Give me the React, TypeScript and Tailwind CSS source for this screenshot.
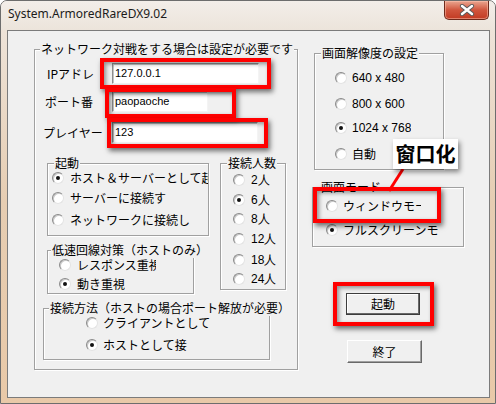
import React from "react";

const jp = "font-['Noto_Sans_CJK_JP','Noto_Sans_CJK_SC',sans-serif]";
const num = "font-['Liberation_Sans',Arial,sans-serif]";

function Radio({ label, checked, gap = 6, w, className = "", h = 20 }: { label: string; checked?: boolean; gap?: number; w?: number; className?: string; h?: number }) {
    return (
        <div className={`flex items-center ${className}`} style={{ height: h }}>
            <span className="flex h-[12px] w-[12px] shrink-0 items-center justify-center rounded-full border border-b-[#e3e3e3] border-l-[#8a8a8a] border-r-[#e3e3e3] border-t-[#8a8a8a] bg-white shadow-[inset_1px_1px_0_#c8c8c8]">
                {checked && <span className="h-[4px] w-[4px] rounded-full bg-[#111]" />}
            </span>
            <span
                className="overflow-hidden whitespace-nowrap text-[12px] leading-[16px] text-black"
                style={{ marginLeft: gap, width: w }}
            >
                {label}
            </span>
        </div>
    );
}

function Group({ title, titleLeft, className = "", children }: { title: string; titleLeft: number; className?: string; children?: React.ReactNode }) {
    return (
        <div className={`relative shrink-0 border border-[#a0a0a0] shadow-[inset_1px_1px_0_#ffffff,1px_1px_0_#ffffff] ${className}`}>
            <span
                className="absolute -top-[9px] whitespace-nowrap bg-[#f0f0f0] px-[1px] text-[12px] leading-[16px] text-black"
                style={{ left: titleLeft }}
            >
                {title}
            </span>
            {children}
        </div>
    );
}

function Field({ value, w }: { value: string; w: number }) {
    return (
        <div
            className={`flex h-[21px] items-center border border-b-[#f4f4f4] border-l-[#8c8c8c] border-r-[#f4f4f4] border-t-[#8c8c8c] bg-white pl-[2px] text-[11px] text-black shadow-[inset_1px_1px_0_#c4c4c4] ${num}`}
            style={{ width: w }}
        >
            {value}
        </div>
    );
}

function Highlight({ x, y, w, h }: { x: number; y: number; w: number; h: number }) {
    return (
        <div
            className="pointer-events-none absolute border-[4px] border-[#ff0000] shadow-[2px_3px_5px_rgba(0,0,0,0.55),inset_2px_2px_4px_rgba(0,0,0,0.4)]"
            style={{ left: x, top: y, width: w, height: h }}
        />
    );
}

export default function App() {
    return (
        <div className={`relative h-[404px] w-[496px] overflow-hidden rounded-t-[7px] border border-[#6d6d6d] bg-gradient-to-b from-[#efe7df] via-[#e6cdb2] to-[#e9c9a8] ${jp}`}>
            {/* title bar */}
            <div className="flex h-[29px] items-start justify-between bg-gradient-to-b from-[#f3eee9] to-[#ece4db]">
                <span className="ml-[7px] mt-[5px] font-['Noto_Sans',sans-serif] text-[12px] leading-[16px] text-[#1b1b1b]">
                    System.ArmoredRareDX9.02
                </span>
                <div className="mr-[6px] flex h-[19px] w-[45px] items-center justify-center rounded-b-[5px] border border-t-0 border-[#6e2a1c] bg-gradient-to-b from-[#e9a590] via-[#d0553d] to-[#c23a22] shadow-[inset_0_0_0_1px_rgba(255,200,180,0.5)]">
                    <svg width="16" height="12" viewBox="0 0 16 12">
                        <path d="M3 2 L13 10 M13 2 L3 10" stroke="#5a5a5a" strokeWidth="4.2" strokeLinecap="round" />
                        <path d="M3 2 L13 10 M13 2 L3 10" stroke="#ffffff" strokeWidth="2.4" strokeLinecap="round" />
                    </svg>
                </div>
            </div>

            {/* client area */}
            <div className="ml-[6px] h-[368px] w-[483px] border border-[#7b7b7b] bg-[#f0f0f0]">
                <div className="flex pl-[26px] pt-[18px]">
                    {/* left big group */}
                    <Group title="ネットワーク対戦をする場合は設定が必要です" titleLeft={5} className="h-[321px] w-[264px]">
                        <div className="flex flex-col">
                            <div className="mt-[13px] flex items-center">
                                <span className="w-[77px] pl-[12px] text-[12px] leading-[16px]">IPアドレ</span>
                                <Field value="127.0.0.1" w={147} />
                            </div>
                            <div className="mt-[7px] flex items-center">
                                <span className="w-[77px] pl-[10px] text-[12px] leading-[16px]">ポート番</span>
                                <Field value="paopaoche" w={96} />
                            </div>
                            <div className="mt-[10px] flex items-center">
                                <span className="w-[77px] pl-[8px] text-[12px] leading-[16px]">プレイヤー</span>
                                <Field value="123" w={146} />
                            </div>

                            <div className="mt-[20px] flex pl-[12px]">
                                <div className="flex flex-col">
                                    <Group title="起動" titleLeft={6} className="h-[73px] w-[162px]">
                                        <div className="flex flex-col pl-[4px] pt-[4px]">
                                            <Radio label="ホスト＆サーバーとして起動" checked w={138} />
                                            <Radio label="サーバーに接続す" />
                                            <Radio label="ネットワークに接続し" className="mt-[2px]" />
                                        </div>
                                    </Group>
                                    <Group title="低速回線対策（ホストのみ）" titleLeft={3} className="mt-[14px] h-[44px] w-[147px]">
                                        <div className="flex flex-col pl-[11px] pt-[4px]">
                                            <Radio label="レスポンス重視" w={79} h={19} />
                                            <Radio label="動き重視" checked h={19} />
                                        </div>
                                    </Group>
                                </div>
                                <Group title="接続人数" titleLeft={6} className="ml-[11px] h-[127px] w-[66px]">
                                    <div className={`flex flex-col pl-[12px] pt-[6px] ${num}`}>
                                        <Radio label="2人" />
                                        <Radio label="6人" checked h={19} />
                                        <Radio label="8人" />
                                        <Radio label="12人" />
                                        <Radio label="18人" h={21} />
                                        <Radio label="24人" h={18} />
                                    </div>
                                </Group>
                            </div>

                            <Group title="接続方法（ホストの場合ポート解放が必要）" titleLeft={5} className="ml-[8px] mt-[14px] h-[52px] w-[227px]">
                                <div className="flex flex-col pl-[42px] pt-[4px]">
                                    <Radio label="クライアントとして" gap={5} />
                                    <Radio label="ホストとして接" checked gap={5} className="mt-[2px]" />
                                </div>
                            </Group>
                        </div>
                    </Group>

                    {/* right column */}
                    <div className="ml-[14px] flex flex-col items-start">
                        <Group title="画面解像度の設定" titleLeft={6} className="ml-[2px] mt-[4px] h-[117px] w-[130px]">
                            <div className={`flex flex-col pl-[20px] ${num}`}>
                                <Radio label="640 x 480" gap={5} className="mt-[14px]" />
                                <Radio label="800 x 600" gap={5} className="mt-[6px]" />
                                <Radio label="1024 x 768" checked gap={5} className="mt-[4px]" />
                                <Radio label="自動" gap={5} className={`mt-[6px] ${jp}`} />
                            </div>
                        </Group>
                        <Group title="画面モード" titleLeft={7} className="mt-[17px] h-[60px] w-[152px]">
                            <div className="flex flex-col pl-[13px] pt-[8px]">
                                <Radio label="ウィンドウモード" gap={5} w={78} />
                                <Radio label="フルスクリーンモード" checked gap={5} w={95} className="mt-[4px]" />
                            </div>
                        </Group>
                        <button className="ml-[34px] mt-[46px] h-[22px] w-[74px] border border-[#3c3c3c] bg-[#f0f0f0] text-[12px] leading-none text-black shadow-[inset_-1px_-1px_0_#696969,inset_1px_1px_0_#ffffff]">
                            起動
                        </button>
                        <button className="ml-[35px] mt-[25px] h-[23px] w-[75px] border border-b-[#696969] border-l-[#ffffff] border-r-[#696969] border-t-[#ffffff] bg-[#f0f0f0] text-[12px] leading-none text-black shadow-[inset_-1px_-1px_0_#a0a0a0]">
                            終了
                        </button>
                    </div>
                </div>
            </div>

            {/* annotations */}
            <Highlight x={99} y={57} w={171} h={31} />
            <Highlight x={104} y={87} w={131} h={30} />
            <Highlight x={106} y={117} w={161} h={30} />
            <Highlight x={312} y={186} w={128} h={36} />
            <Highlight x={332} y={281} w={101} h={44} />

            <svg className="pointer-events-none absolute left-0 top-0" width="496" height="404">
                <line x1="402" y1="168" x2="388" y2="190" stroke="#ff0000" strokeWidth="3" />
            </svg>
            <div className="absolute left-[392px] top-[138px] flex h-[30px] w-[65px] items-center justify-center bg-white shadow-[2px_3px_5px_rgba(0,0,0,0.45)]">
                <span className="font-['Noto_Sans_CJK_SC',sans-serif] text-[20px] font-bold leading-none text-black">窗口化</span>
            </div>
        </div>
    );
}
